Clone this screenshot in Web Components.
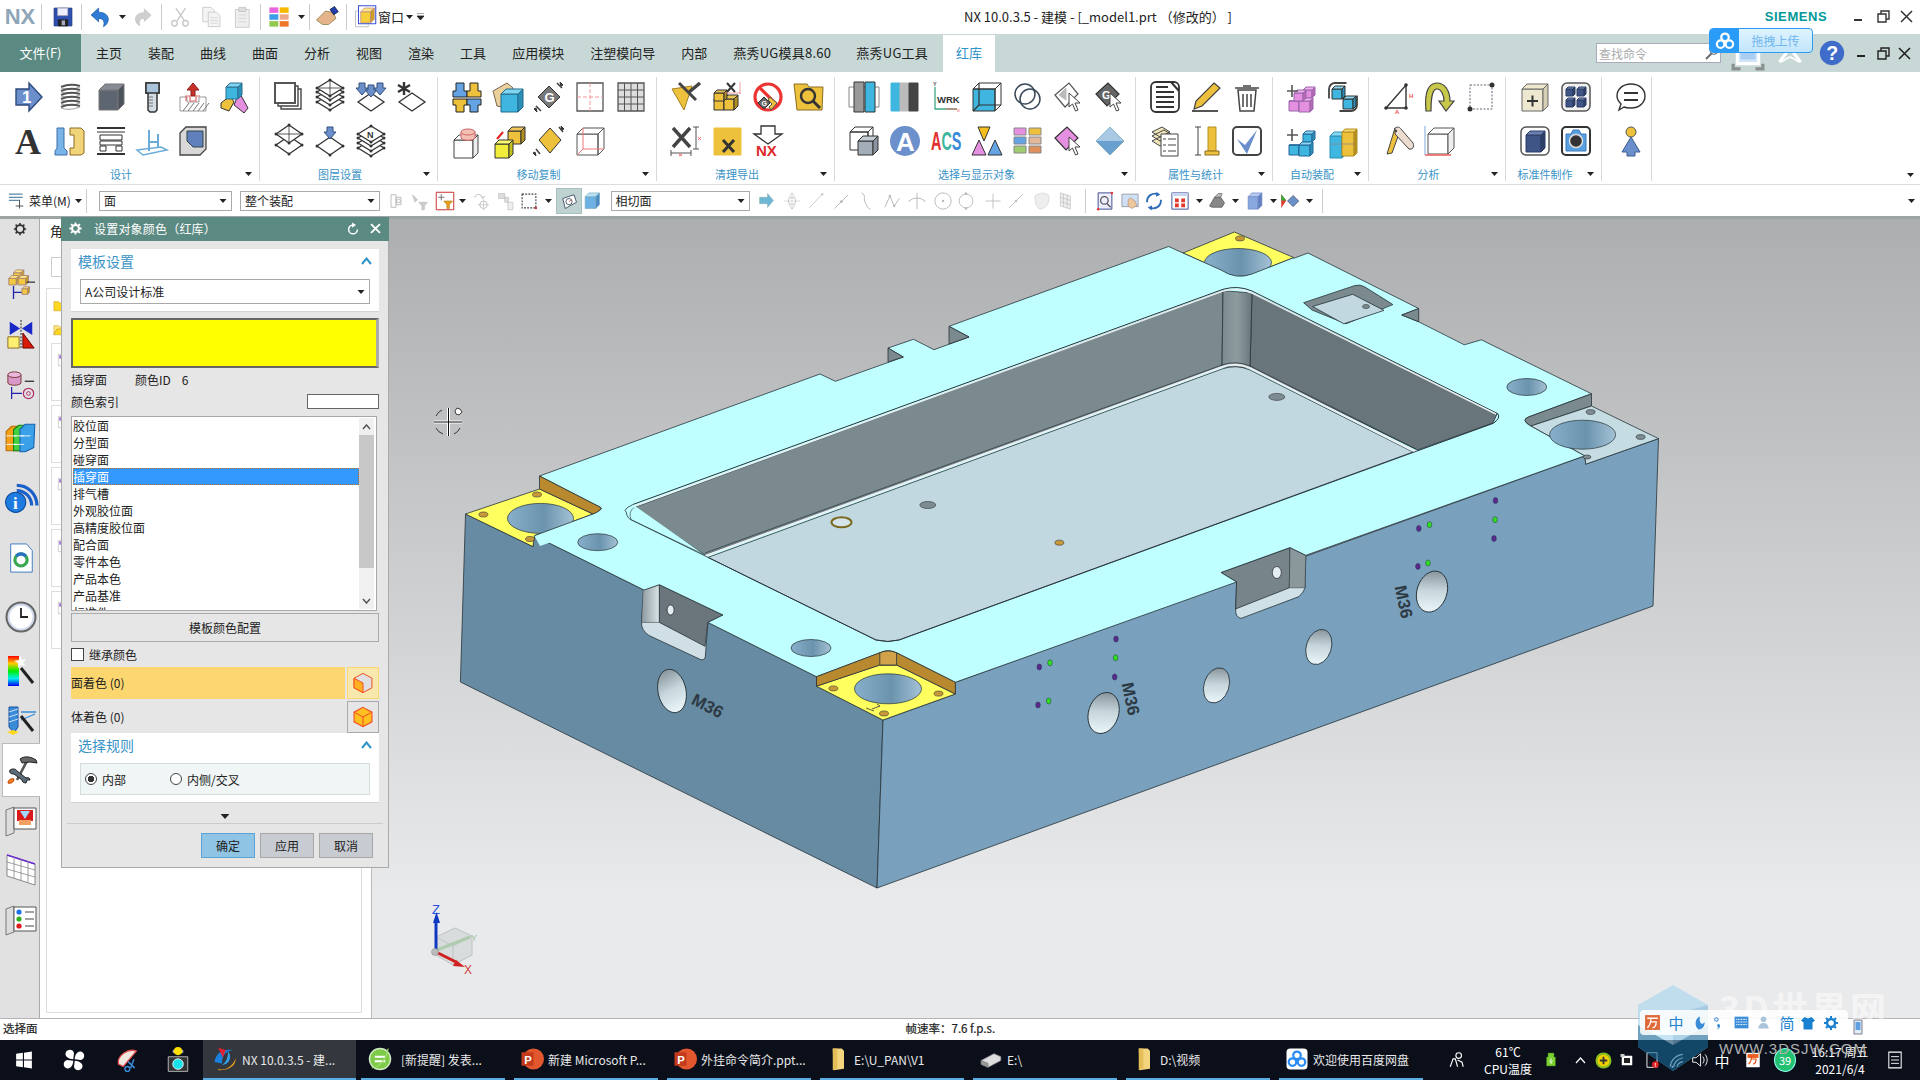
<!DOCTYPE html>
<html lang="zh">
<head>
<meta charset="utf-8">
<title>NX 10</title>
<style>
  html, body { margin: 0; height: 1080px; width: 1920px; overflow: hidden; }
  body {
    position: relative;
    display: flex;
    flex-direction: column;
    font: 12px "Noto Sans CJK SC", "Liberation Sans", sans-serif;
    color: #222;
    background: #fff;
  }
</style>
</head>
<body>
<nx-titlebar></nx-titlebar>
<nx-tabs></nx-tabs>
<nx-ribbon>
  <rib-group label="设计" cols="6" caret>
    <nx-icon name="arrow1"></nx-icon><nx-icon name="spring"></nx-icon><nx-icon name="box"></nx-icon><nx-icon name="bolt"></nx-icon><nx-icon name="pocket"></nx-icon><nx-icon name="shapes"></nx-icon>
    <nx-icon name="bigA"></nx-icon><nx-icon name="pin"></nx-icon><nx-icon name="plates"></nx-icon><nx-icon name="planes"></nx-icon><nx-icon name="hollow"></nx-icon>
  </rib-group>
  <rib-group label="图层设置" cols="4" caret>
    <nx-icon name="copysq"></nx-icon><nx-icon name="layers"></nx-icon><nx-icon name="downs"></nx-icon><nx-icon name="stardia"></nx-icon>
    <nx-icon name="twodia"></nx-icon><nx-icon name="downdia"></nx-icon><nx-icon name="nlayers"></nx-icon>
  </rib-group>
  <rib-group label="移动复制" cols="5" caret>
    <nx-icon name="joints"></nx-icon><nx-icon name="foldbox"></nx-icon><nx-icon name="grot"></nx-icon><nx-icon name="sheet"></nx-icon><nx-icon name="grid"></nx-icon>
    <nx-icon name="cubecyl"></nx-icon><nx-icon name="twocubes"></nx-icon><nx-icon name="goldrot"></nx-icon><nx-icon name="wirered"></nx-icon>
  </rib-group>
  <rib-group label="清理导出" cols="4" caret>
    <nx-icon name="brush"></nx-icon><nx-icon name="goldx"></nx-icon><nx-icon name="nog"></nx-icon><nx-icon name="foldsearch"></nx-icon>
    <nx-icon name="xdim"></nx-icon><nx-icon name="yellowx"></nx-icon><nx-icon name="nxdown"></nx-icon>
  </rib-group>
  <rib-group label="选择与显示对象" cols="7" caret>
    <nx-icon name="bars"></nx-icon><nx-icon name="stripes"></nx-icon><nx-icon name="wrk"></nx-icon><nx-icon name="wireblue"></nx-icon><nx-icon name="circles"></nx-icon><nx-icon name="whitecur"></nx-icon><nx-icon name="gcur"></nx-icon>
    <nx-icon name="wiregray"></nx-icon><nx-icon name="acircle"></nx-icon><nx-icon name="acs"></nx-icon><nx-icon name="tris"></nx-icon><nx-icon name="swatch"></nx-icon><nx-icon name="pinkcur"></nx-icon><nx-icon name="bluedia"></nx-icon>
  </rib-group>
  <rib-group label="属性与统计" cols="3" caret>
    <nx-icon name="doc"></nx-icon><nx-icon name="pencil"></nx-icon><nx-icon name="trash"></nx-icon>
    <nx-icon name="sheets"></nx-icon><nx-icon name="heightbar"></nx-icon><nx-icon name="check"></nx-icon>
  </rib-group>
  <rib-group label="自动装配" cols="2" caret>
    <nx-icon name="pinkplus"></nx-icon><nx-icon name="swapcube"></nx-icon>
    <nx-icon name="blueplus"></nx-icon><nx-icon name="bluegold"></nx-icon>
  </rib-group>
  <rib-group label="分析" cols="3" caret>
    <nx-icon name="triangle"></nx-icon><nx-icon name="arcarrow"></nx-icon><nx-icon name="dashrect"></nx-icon>
    <nx-icon name="anglebar"></nx-icon><nx-icon name="cubeline"></nx-icon>
  </rib-group>
  <rib-group label="标准件制作" cols="2" caret>
    <nx-icon name="cubeplus"></nx-icon><nx-icon name="fourcubes"></nx-icon>
    <nx-icon name="navycube"></nx-icon><nx-icon name="camera"></nx-icon>
  </rib-group>
  <rib-group cols="1" narrow>
    <nx-icon name="speech"></nx-icon><nx-icon name="person"></nx-icon>
  </rib-group>
</nx-ribbon>
<nx-selbar></nx-selbar>
<nx-main>
  <nx-rail slot="rail"></nx-rail>
  <nx-panel slot="panel"></nx-panel>
  <nx-model slot="view"></nx-model>
</nx-main>
<nx-status></nx-status>
<nx-taskbar></nx-taskbar>
<nx-dialog></nx-dialog>
<nx-upload></nx-upload>
<nx-watermark></nx-watermark>
<nx-ime></nx-ime>

<script>
// drawing helpers, icons are all on a 32 unit box
const L = (d, c = '#333', w = 2) => `<path d="${d}" fill="none" stroke="${c}" stroke-width="${w}"/>`;
const F = (d, f, s = '#333', w = 1) => `<path d="${d}" fill="${f}" stroke="${s}" stroke-width="${w}"/>`;
const T = (x, y, t, size, c, fam = 'Liberation Sans', wt = 'bold') =>
  `<text x="${x}" y="${y}" font-size="${size}" fill="${c}" font-family='${fam}' font-weight="${wt}">${t}</text>`;
const cube = (x, y, w, h, d, top, front, side, st = '#333') =>
  F(`M${x} ${y + d}h${w}v${h}h${-w}z`, front, st) +
  F(`M${x} ${y + d}l${d} ${-d}h${w}l${-d} ${d}z`, top, st) +
  F(`M${x + w} ${y + d}l${d} ${-d}v${h}l${-d} ${d}z`, side, st);
const dia = (cy, f = '#fff', rx = 13, ry = 8, cx = 16) =>
  F(`M${cx - rx} ${cy}L${cx} ${cy - ry}L${cx + rx} ${cy}L${cx} ${cy + ry}z`, f, '#333', 1.3);
const dots = (cy, rx = 13, ry = 8, cx = 16) =>
  [[cx - rx, cy], [cx + rx, cy], [cx, cy - ry], [cx, cy + ry]].map(p => `<circle cx="${p[0]}" cy="${p[1]}" r="1.5" fill="#333"/>`).join('');
const cursor = (x, y) => F(`M${x} ${y}l0 14l3.5-3l3 7l2.5-1l-3-7l5 0z`, '#fff', '#444', 1);
const downArrow = (cx, y, f = '#6a8fcb') => F(`M${cx - 3} ${y}h6v5h3l-6 7l-6-7h3z`, f, '#33507f', 1);

const BLUE = '#3fb6e0', GOLD = '#eec13c', PINK = '#e58fe0', NAVY = '#3f5585';

const ICONS = {
  arrow1: F('M3 8h13V2l13 14-13 14v-6H3z', '#6a8fcb', '#2c4a7c', 1.4) + T(9, 22, '1', 17, '#fff'),
  spring: [5, 9, 13, 17, 21, 25].map(y => L(`M7 ${y + 1}Q16 ${y - 3} 26 ${y}`, '#555', 2) + L(`M7 ${y + 2}Q16 ${y + 5} 26 ${y + 1}`, '#aaa', 1.2)).join(''),
  box: cube(4, 3, 19, 20, 6, '#858c95', '#5d6570', '#4b535d', '#777'),
  bolt: F('M10 2h13v10h-2v17l-2 2h-5l-2-2V12h-2z', '#d3dde6', '#333', 1.5) + F('M10 2h13v10H10z', '#a9c3db', '#333', 1.5) + [16, 19, 22, 25].map(y => L(`M13 ${y}h4`, '#777', 1)).join(''),
  pocket: F('M3 16h7v5h12v-5h7v14H3z', '#fff', '#999', 1) + [6, 11, 16, 21, 26].map(x => L(`M${x} 30l6-8`, '#777', 1)).join('') + F('M9 20v-5h4v5h6v-5h4', 'none', '#d66', 1.2) + F('M14 15V9h-4l6-7l6 7h-4v6z', '#c8312a', '#8a1e18', 1),
  shapes: F('M3 22l9-7l4 6l-5 9l-8-3z', GOLD, '#333') + F('M21 11l9 16l-4 5l-10-8z', PINK, '#333') + cube(8, 2, 12, 12, 4, '#7fd4ef', BLUE, '#2a90b8', '#2a6f90'),
  bigA: T(2, 29, 'A', 36, '#333', 'Liberation Serif'),
  pin: F('M3 3h7v20l3 3v4H1v-4l2-3z', '#79b4e8', '#3f6fa8') + F('M16 3h11l3 3v22l-3 2H16v-7h4V10h-4z', '#f2d47a', '#8a6a20'),
  plates: L('M2 3h28', '#333', 2) + L('M2 7h28', '#333', 1) + F('M5 10h22v5H5z', '#fff') + F('M5 16h22v4H5z', '#fff') + F('M5 21h6v5H5zM21 21h6v5h-6z', '#fff') + L('M2 29h28', '#333', 2),
  planes: L('M1 25l24-3l6 3-24 5z', '#6aabd8', 1.5) + L('M13 5v21M22 9v14M13 17h9', '#6aabd8', 2),
  hollow: F('M3 8l6-6h20v22l-6 6H3z', '#d8d8d8', '#444', 1.3) + F('M10 6h16v16H16l-6-6z', '#5f80bd', '#344'),
  copysq: F('M8 8h20v20H8z', '#fff', '#444', 1.4) + F('M5 5h20v20H5z', '#fff', '#444', 1.4) + F('M2 2h20v20H2z', '#fff', '#555', 2),
  layers: [21, 16, 11, 7].map(y => dia(y) + dots(y)).join('') + L('M3 7h26M16 -1v16', '#333', .8),
  downs: dia(21, '#fff', 13, 9) + downArrow(7, 2) + downArrow(16, 4) + downArrow(25, 2),
  stardia: dia(21, '#fff', 13, 9) + L('M8 1v13M2 4l12 7M14 4L2 11', '#333', 2.4),
  twodia: dia(20, '#fff', 13, 9) + dots(20, 13, 9) + dia(9, '#fff', 13, 9) + dots(9, 13, 9) + L('M3 9h26M16 0v18', '#333', .8),
  downdia: dia(21, '#fff', 13, 9) + dots(21, 13, 9) + downArrow(16, 2),
  nlayers: [23, 18, 13].map(y => dia(y) + dots(y)).join('') + dia(9) + dots(9) + T(12, 13, 'N', 9, '#333'),
  joints: F('M5 2h8v8h3v6H2v-6h3z', '#64a4e4', '#222') + F('M19 2h8v8h3v6H16v-6h3z', GOLD, '#222') + F('M2 18h14v6h-3v7H5v-7H2z', GOLD, '#222') + F('M16 18h14v6h-3v7h-8v-7h-3z', '#64a4e4', '#222'),
  foldbox: F('M1 10l14-8l6 5l-6 20l-10-2z', '#ead09a', '#765') + cube(9, 8, 17, 18, 5, '#7fd4ef', BLUE, '#2a90b8', '#256a8a'),
  grot: F('M16 5l11 11l-11 11L5 16z', '#777', '#333') + T(11.5, 21, 'G', 13, '#fff') + L('M24 2l5 5M3 25l5 5', '#444', 1.6) + F('M27 1l3 3l-2 1zM4 31l-3-3l2-1z', '#333', '#333'),
  sheet: F('M3 2h26v28H3z', '#fff', '#555', 1.3) + L('M16 2v28M3 16h26', '#f29a9a', 1).replace('stroke-width', 'stroke-dasharray="4 2" stroke-width'),
  grid: F('M3 2h26v28H3z', '#ddd', '#555', 1.3) + L('M9.5 2v28M16 2v28M22.5 2v28M3 9h26M3 16h26M3 23h26', '#555', 1),
  cubecyl: cube(3, 10, 19, 18, 5, '#fff', '#fff', '#eee', '#444') + F('M10 7v6c2 3 12 3 14 0V7', '#f4c0b4', '#c66') + `<ellipse cx="17" cy="7" rx="7" ry="3" fill="#f4c0b4" stroke="#c66"/>`,
  twocubes: cube(16, 2, 13, 13, 4, '#f0c85c', GOLD, '#b38f20') + cube(3, 15, 14, 14, 4, '#ffff70', '#f0ee3a', '#c4c020') + L('M5 14l6-7', '#e02020', 2),
  goldrot: F('M17 3l11 12l-11 13L6 15z', GOLD, '#333') + L('M26 2l4 5M3 24l4 5', '#444', 1.6) + F('M28 1l3 3l-2 1zM3 31l-3-3l2-1z', '#333', '#333'),
  wirered: cube(3, 3, 21, 21, 6, '#fff', 'none', 'none', '#555') + L('M9 3v21h21M9 24l-6 6', '#ee7777', 1),
  brush: F('M2 8l20-3l-8 24z', GOLD, '#a08020') + L('M18 12L30 2', '#444', 3.5) + L('M9 2L26 19', '#444', 3),
  goldx: cube(3, 14, 10, 11, 4, '#e8c458', GOLD, '#b38f20') + cube(13, 14, 10, 11, 4, '#e8c458', GOLD, '#b38f20') + cube(3, 9, 10, 8, 3, '#e8c458', GOLD, '#b38f20') + L('M16 2l8 9M24 2l-8 9', '#333', 2) + L('M14 12h16M29 1v12', '#e88', .8),
  nog: `<circle cx="16" cy="16" r="13" fill="#fff" stroke="#e33" stroke-width="3.2"/>` + L('M7 6l19 19', '#e33', 3.2) + F('M6 22l6-6l6 6l-6 6z', '#666') + T(9.5, 25, 'G', 7, '#fff') + F('M18 16l7 6l-6 7l-2-3l3-3l-4-4z', GOLD, '#555'),
  foldsearch: F('M1 3h13l2 3h14l-1 23H4z', GOLD, '#8a6a20') + `<circle cx="15" cy="15" r="7" fill="${GOLD}" stroke="#333" stroke-width="2.4"/>` + L('M20 20l7 7', '#333', 3),
  xdim: L('M3 3l17 19M20 3L3 22', '#444', 3.4) + L('M26 2v22M23 2h6M23 24h6M1 28h20M1 25v6M21 25v6', '#555', 1) + L('M28 12l3 3M31 12l-3 3M9 29l3 2M12 29l-3 2', '#e44', .7),
  yellowx: F('M3 3h27v27H3z', GOLD, GOLD) + L('M12 15l11 12M23 15L12 27', '#333', 3),
  nxdown: F('M9 1h14v8h7L16 19 2 9h7z', '#fff', '#333', 1.3) + T(4, 31, 'NX', 15, '#e0282c'),
  bars: F('M1 6h30v20H1z', 'none', '#888') + F('M6 1h10v30H6z', '#9a9a9a', '#333') + F('M17 1h10v30H17z', BLUE, '#333'),
  stripes: F('M2 2h9v28H2z', BLUE, BLUE) + F('M11 2h9v28h-9z', '#bbb', '#bbb') + F('M20 2h9v28h-9z', '#444', '#444'),
  wrk: L('M5 6v22h22', '#3ea888', 1.3) + L('M16 28h11', '#e66', 1) + T(3, 5, 'Y', 5.5, '#555') + T(7, 22, 'WRK', 9.5, '#333') + T(27, 31, 'x', 5.5, '#e55', 'Liberation Sans', 'normal'),
  wireblue: cube(2, 2, 22, 22, 6, 'none', BLUE, 'none', '#333') + L('M8 2v22h22M2 30l6-6', '#333', 1.2),
  circles: `<circle cx="13" cy="13" r="10" fill="none" stroke="#3a4a58" stroke-width="1.5"/><circle cx="18" cy="18" r="10" fill="none" stroke="#3a4a58" stroke-width="1.5"/>`,
  whitecur: F('M2 14L16 2l9 11l-13 13z', '#fff', '#555', 1.2) + F('M6 14l7-7v12z', '#bbb', '#bbb') + cursor(16, 12),
  gcur: F('M2 13L14 2l11 11-12 12z', '#666', '#333', 1.2) + T(8, 18, 'G', 11, '#fff') + cursor(16, 12),
  wiregray: cube(2, 2, 18, 18, 5, 'none', 'none', 'none', '#333') + cube(10, 11, 15, 14, 5, '#c4ccd4', '#a3adb8', '#8a94a0'),
  acircle: `<circle cx="16" cy="16" r="15" fill="#6c90cc"/>` + T(7, 26, 'A', 26, '#fff'),
  acs: `<text transform="translate(1 25) scale(.72 1.32)" font-size="20" font-family="Liberation Sans" font-weight="bold"><tspan fill="#e03030">A</tspan><tspan fill="#3fb6a0">C</tspan><tspan fill="#3a8cd8">S</tspan></text>`,
  tris: F('M7 2h12L13 16z', '#f4c020', '#333') + F('M1 30L8 15l7 15z', PINK, '#333') + F('M17 30l7-15l7 15z', '#64a4e4', '#333'),
  swatch: F('M2 3h12v7H2z', PINK, '#888') + F('M17 3h12v7H17z', GOLD, '#888') + F('M2 12h12v7H2z', '#64a4e4', '#888') + F('M17 12h12v7H17z', '#e4b89c', '#888') + F('M2 21h12v7H2z', '#a0cc70', '#888') + F('M17 21h12v7H17z', '#e0905c', '#888'),
  pinkcur: F('M2 13L14 2l11 11-12 12z', PINK, '#333', 1.2) + cursor(16, 12),
  bluedia: F('M16 2l14 14-14 14L2 16z', '#6aa0d0', '#7ab', 1) + F('M16 2l14 14H2z', '#a8c8e4', 'none', 0),
  doc: `<rect x="2" y="1" width="28" height="30" rx="5" fill="#fff" stroke="#333" stroke-width="1.8"/>` + L('M7 11h18M7 16h18M7 21h18M7 26h18', '#333', 2.2) + L('M7 6h12M22 1l8 9', '#333', 2),
  pencil: F('M24 2l6 5L12 25l-8 3l2-8z', GOLD, '#444', 1.2) + L('M2 30h26', '#555', 2),
  trash: F('M7 9h18l-2 21H9z', '#fff', '#444', 1.5) + L('M4 7h24M12 5h8M12 13v13M16 13v13M20 13v13', '#444', 1.5),
  sheets: F('M3 16l12-6l8 5-12 6zM3 11l12-6l8 5-12 6zM3 7l10-5l8 5-10 5z', '#f0e4b8', '#444') + F('M12 9h17v22H12z', '#fff', '#444') + L('M14 14h3M19 14h8M14 20h3M19 20h8M14 26h3M19 26h8', '#444', 1),
  heightbar: F('M18 2h8v24h-8z', GOLD, '#b38f20') + F('M15 26h14v4H15z', GOLD, '#8a6a20') + L('M8 2v28M5 2h6M5 30h6', '#444', 1),
  check: `<rect x="2" y="2" width="28" height="28" rx="4" fill="#fff" stroke="#444" stroke-width="2"/>` + F('M6 14l8 6L26 5l-10 24z', '#6a8fcb', 'none', 0),
  pinkplus: cube(17, 6, 9, 8, 3, '#f0b0ec', PINK, '#b868b4', '#96a') + cube(3, 20, 10, 10, 0, PINK, PINK, PINK, '#96a') + cube(13, 17, 11, 11, 3, '#f0b0ec', PINK, '#b868b4', '#96a') + cube(8, 9, 9, 8, 3, '#f0b0ec', PINK, '#b868b4', '#96a') + L('M1 10h11M6 4v12', '#555', 1.6),
  blueplus: cube(17, 6, 9, 8, 3, '#8ad8f0', BLUE, '#2a90b8', '#269') + cube(3, 20, 10, 10, 0, BLUE, BLUE, BLUE, '#269') + cube(13, 17, 11, 11, 3, '#8ad8f0', BLUE, '#2a90b8', '#269') + L('M1 10h11M6 4v12', '#555', 1.6),
  swapcube: `<rect x="2" y="2" width="28" height="28" rx="6" fill="#fff" stroke="#444" stroke-width="1.8"/>` + F('M20 0h12v14H20z', '#fff', '#fff') + F('M0 18h12v14H0z', '#fff', '#fff') + cube(5, 5, 10, 10, 3, '#8ad8f0', BLUE, '#2a90b8') + cube(16, 15, 10, 10, 3, '#8ad8f0', BLUE, '#2a90b8'),
  bluegold: cube(3, 7, 12, 22, 4, '#8ad8f0', BLUE, '#2a90b8', '#2a90b8') + cube(15, 4, 12, 24, 3, '#f4d470', GOLD, '#b38f20', '#b38f20') + L('M3 19h24', '#888', .8),
  triangle: L('M4 27L24 4v23z', '#333', 1.4) + `<circle cx="4" cy="27" r="1.8" fill="#333"/><circle cx="24" cy="4" r="1.8" fill="#333"/><circle cx="24" cy="27" r="1.8" fill="#333"/>` + T(27, 17, 'H', 6, '#e55') + T(13, 33, 'A', 6, '#e55'),
  arcarrow: F('M3 30C1 10 6 2 14 2s13 8 13 18h4l-8 10l-7-10h5C21 14 18 8 14 8S8 14 8 30z', '#c8c84a', '#444', 1.2),
  dashrect: L('M6 4h22v24H6z', '#667', 1).replace('stroke-width', 'stroke-dasharray="2 1.5" stroke-width') + `<circle cx="28" cy="4" r="2.5" fill="#333"/><circle cx="6" cy="28" r="2.5" fill="#333"/>`,
  anglebar: F('M13 3l5 3l-8 22l-5 1z', GOLD, '#444') + F('M13 3c4-2 5 0 6 1l12 14c2 4-1 7-4 6L13 9z', '#ecdcd0', '#444') + `<circle cx="14" cy="6" r="1.2" fill="#444"/>`,
  cubeline: cube(5, 3, 20, 20, 6, '#fff', '#fff', '#eee', '#555') + L('M2 1v29', '#7aa8d8', 1) + L('M2 30h26', '#ee6666', 1.6),
  cubeplus: cube(3, 3, 21, 22, 5, '#efe8d0', '#efe8d0', '#d8d0b4', '#666') + L('M8 20h11M13.5 14.5v11', '#333', 2),
  fourcubes: `<rect x="2" y="2" width="28" height="28" rx="5" fill="#f2f2f2" stroke="#555" stroke-width="1.5"/>` + [[6, 6], [17, 6], [6, 17], [17, 17]].map(p => cube(p[0], p[1], 7, 7, 2, '#7a90c0', NAVY, '#2d3f66', '#2d3f66')).join(''),
  navycube: `<rect x="2" y="2" width="28" height="28" rx="5" fill="#fff" stroke="#555" stroke-width="1.5"/>` + cube(7, 6, 15, 17, 4, '#6a80b0', NAVY, '#2d3f66', '#2d3f66'),
  camera: `<rect x="2" y="2" width="28" height="28" rx="4" fill="#fff" stroke="#333" stroke-width="2"/>` + F('M6 9h5l2-4h6l2 4h5v17H6z', '#5aa0e0', '#3a78c0', 1) + `<circle cx="16" cy="16" r="6.5" fill="#333" stroke="#ddd" stroke-width="1.5"/>`,
  speech: F('M16 3c8 0 14 5 14 12s-6 12-14 12c-3 0-5 0-7-1l-5 3l2-6c-2-2-4-5-4-8C2 8 8 3 16 3z', '#fff', '#333', 1.4) + L('M9 12h14M9 19h14', '#333', 2),
  person: `<circle cx="16" cy="7" r="5" fill="${GOLD}" stroke="#555"/>` + F('M16 12l9 15h-5v4h-8v-4H7z', '#6a8fcb', '#3a5c90'),

  // quick access
  nxsave: F('M3 3h26v26H3z', '#2d4fb0', '#1b2f70') + F('M8 3h15v11H8z', '#eef', '#99a') + F('M9 20h14v9H9z', '#222', '#222') + F('M14 21h5v7h-5z', '#aab', 'none', 0),
  undo: F('M3 13L14 3v6c9 0 15 5 14 12c-1 4-3 7-7 9c2-6 1-12-7-12v5z', '#2e7cd6', '#1c56a0'),
  redo: F('M29 13L18 3v6C9 9 3 14 4 21c1 4 3 7 7 9c-2-6-1-12 7-12v5z', '#cfcfcf', '#bbb'),
  cut: L('M10 3l12 18M24 3L12 21', '#c8c8c8', 2) + `<circle cx="8" cy="25" r="4" fill="none" stroke="#c8c8c8" stroke-width="2"/><circle cx="24" cy="25" r="4" fill="none" stroke="#c8c8c8" stroke-width="2"/>`,
  copy: F('M4 2h12l5 5v16H4z', '#f4f4f4', '#ccc', 1.4) + F('M12 9h12l5 5v16H12z', '#f4f4f4', '#ccc', 1.4) + L('M15 17h11M15 21h11M15 25h11', '#ccc', 1),
  paste: F('M5 5h20v26H5z', '#eee', '#ccc', 1.4) + F('M10 2h10v6H10z', '#ddd', '#bbb') + L('M9 13h12M9 18h12M9 23h12', '#ccc', 1),
  colors: F('M2 2h13v8H2z', '#e865e0', 'none', 0) + F('M17 2h13v8H17z', '#f6b800', 'none', 0) + F('M2 12h13v8H2z', '#3b9de8', 'none', 0) + F('M17 12h13v8H17z', '#eea888', 'none', 0) + F('M2 22h13v8H2z', '#90c850', 'none', 0) + F('M17 22h13v8H17z', '#ee7828', 'none', 0),
  hand: F('M2 20l12-12l10 2l4 8l-10 8l-8 0z', '#e6b48a', '#874') + F('M20 6l6-4l5 7l-6 4z', '#2040b0', '#113'),
  winbox: L('M2 8h3M2 8v21h17v-3', '#bbb', 1.2) + cube(9, 4, 13, 15, 5, '#ffe680', '#f6cf3a', '#d0a020', '#b88') + L('M6 1h23v24H6z', '#3a50d0', 1.4),

  // selection bar
  menu: L('M3 5h22M3 10h22M3 15h16', '#5d8aa8', 2) + L('M20 14v14M14 24h12', '#555', 1.6),
  s1: L('M8 6h8v20H8zM16 10h8v12h-8z', '#bbb', 1.5) + `<circle cx="20" cy="16" r="3" fill="none" stroke="#bbb" stroke-width="1.5"/>`,
  s2: F('M4 6l8 8l-4 4zM14 18h14l-5 6v6h-4v-6z', '#ccc', '#bbb'),
  s3: F('M2 2h28v28H2z', '#fff', '#c33', 1.6) + L('M10 5v10M5 10h10', '#666', 1.4) + F('M14 16h14l-5 6v6h-4v-6z', '#e6a020', '#b58010'),
  s4: L('M6 10c2-6 10-6 12 0M16 8l3 4l3-4', '#bbb', 1.6) + `<circle cx="20" cy="22" r="6" fill="none" stroke="#bbb" stroke-width="1.4"/>` + L('M20 13v18M11 22h18', '#bbb', 1),
  s5: F('M4 4h10v8H4zM14 10h6v8h-6z', '#ddd', '#bbb') + F('M19 18h8v12h-8z', '#eee', '#bbb'),
  s6: L('M5 5h22v22H5z', '#444', 1.8).replace('stroke-width', 'stroke-dasharray="3 2" stroke-width') + `<circle cx="27" cy="27" r="2" fill="#c33"/>`,
  s7: F('M6 12L24 6l4 12L10 28z', '#fff', '#456', 1.5) + `<circle cx="16" cy="17" r="5" fill="none" stroke="#456" stroke-width="1.4"/>` + L('M16 17l4-3', '#c33', 1.2),
  s8: cube(5, 3, 17, 19, 6, '#b8e0f4', '#6cb0e4', '#4a8cc8', '#7ab'),
  arrowr: F('M3 10h15V3l11 13-11 13v-7H3z', '#6fb7d6', '#8aa'),
  p1: L('M16 3v26M3 16h26', '#ccc', 1) + `<circle cx="16" cy="16" r="6" fill="none" stroke="#bbb" stroke-width="1.3"/>` + L('M16 3l-5 7M16 3l5 7M16 29l-5-7M16 29l5-7', '#bbb', 1),
  p2: L('M5 27L26 5', '#ccc', 1.6) + `<circle cx="26" cy="5" r="2" fill="#ccc"/>`,
  p3: L('M4 28L26 6', '#bbb', 1.6) + `<circle cx="15" cy="17" r="2.2" fill="#bbb"/>`,
  p4: L('M9 3c8 4 2 10 6 16s2 8 8 10', '#bbb', 1.6),
  p5: L('M3 26l8-18l7 16l8-12', '#bbb', 1.6) + `<circle cx="11" cy="8" r="2" fill="#bbb"/><circle cx="18" cy="24" r="2" fill="#bbb"/>`,
  p6: L('M2 17Q16 5 30 17M16 3v26', '#bbb', 1.6),
  p7: `<circle cx="16" cy="16" r="13" fill="none" stroke="#bbb" stroke-width="1.5"/><circle cx="16" cy="16" r="2" fill="#bbb"/>`,
  p8: `<circle cx="16" cy="16" r="11" fill="none" stroke="#bbb" stroke-width="1.5"/><circle cx="16" cy="4" r="2" fill="#bbb"/><circle cx="16" cy="28" r="2" fill="#bbb"/>`,
  p9: L('M16 4v24M4 16h24', '#bbb', 1.4),
  p10: L('M5 27L27 5', '#bbb', 1.4) + `<circle cx="16" cy="16" r="2" fill="#bbb"/>`,
  p11: F('M5 8c6-6 18-6 22 0v8c-2 6-6 12-14 13C7 26 5 20 5 14z', '#eee', '#ccc'),
  p12: F('M7 3l16 5v21L7 24z', '#eee', '#bbb') + L('M12 5v20M18 6v21M7 10l16 5M7 17l16 5', '#bbb', 1),
  v1: F('M5 3h22v26H5z', '#eef', '#2a3a80', 1.4) + `<circle cx="15" cy="15" r="6" fill="none" stroke="#555" stroke-width="2"/>` + L('M19 20l6 6', '#555', 2) + `<circle cx="5" cy="29" r="2" fill="#e33"/><circle cx="27" cy="3" r="2" fill="#e33"/>`,
  v2: F('M3 5h26v20H3z', '#cfe0f4', '#778') + F('M13 14l4-3l7 5l3 7l-8 5l-6-4z', '#eec89c', '#a87'),
  v3: L('M5 18C4 8 14 2 22 5M27 14c1 10-9 16-17 13', '#2c6cb8', 3) + F('M20 1l6 5l-7 3z', '#2c6cb8', 'none', 0) + F('M12 31l-6-5l7-3z', '#2c6cb8', 'none', 0),
  v4: F('M3 3h26v26H3z', '#fff', '#3a4a90', 1.5) + F('M3 3h26v5H3z', '#c8d4f0', 'none', 0) + F('M8 12h6v6H8zM18 12h6v6h-6zM8 20h6v6H8zM18 20h6v6h-6z', '#e03a2c', 'none', 0),
  v5: F('M4 24l8-14h10l6 9l-4 7H8z', '#888', '#444') + F('M12 10l6-6h6l-2 6z', '#bbb', '#555'),
  v6: cube(5, 3, 16, 20, 6, '#b4c8f0', '#8aa8e0', '#6080c0', '#6680c0'),
  v7: F('M2 5l8 10l-8 12z', '#e03a2c', 'none', 0) + F('M2 5l8 10l-8 0z', '#38a838', 'none', 0) + F('M12 16l9-9l9 9l-9 9z', '#6a90c8', '#445'),

  // rail
  r_asm: cube(8, 1, 8, 7, 3, '#ffe680', '#f2c840', '#c89c20', '#a87') + cube(3, 7, 8, 7, 3, '#ffe680', '#f2c840', '#c89c20', '#a87') + cube(13, 7, 8, 7, 3, '#ffe680', '#f2c840', '#c89c20', '#a87') + L('M8 18v14M8 25h9', '#2222aa', 1.4) + L('M22 14h9', '#222', 1.2) + cube(17, 19, 6, 6, 2, '#ffe680', '#f2c840', '#c89c20', '#a87'),
  r_con: F('M4 3l11 7l-11 7zM28 3L17 10l11 7z', '#1a28c8', 'none', 0) + L('M16 1v31', '#111', 1).replace('stroke-width', 'stroke-dasharray="2 1.5" stroke-width') + F('M2 19h12v12H2z', '#ffef70', '#8a6a20') + F('M18 15l12 16H18z', '#d81a0a', '#600'),
  r_part: F('M2 5v9c2 3 12 3 14 0V5', '#d898c8', '#733') + `<ellipse cx="9" cy="5" rx="7" ry="3" fill="#eab8dc" stroke="#733"/>` + L('M20 12h10', '#222', 1.3) + L('M6 18v13M6 25h11', '#2222aa', 1.3) + `<circle cx="24" cy="25" r="5.5" fill="none" stroke="#b0306a" stroke-width="1.3"/><circle cx="24" cy="25" r="2" fill="none" stroke="#b0306a"/>`,
  r_books: F('M2 10l5-5h6v23H2z', '#f2a018', '#b86a00') + F('M9 8l5-4h6v24H9z', '#40d040', '#108010') + F('M15 8l5-5h9l-1 22-8 4h-5z', '#3aa0e8', '#1a60b0') + L('M2 14h10M9 14h10M15 14h10M2 22h10M9 22h10', '#fff', .8),
  r_info: `<path d="M12 10a14 14 0 0 1 14 14M12 5a19 19 0 0 1 19 19" fill="none" stroke="#1a60c8" stroke-width="3"/><circle cx="11" cy="21" r="9.5" fill="#1e7ce0" stroke="#0a4a9a"/>` + T(8.5, 27, 'i', 16, '#fff', 'Liberation Serif'),
  r_doc: F('M5 1h17l6 7v23H5z', '#fff', '#3a78c0', 1) + `<circle cx="16" cy="18" r="6.5" fill="none" stroke="#3aa850" stroke-width="3.4"/>` + `<path d="M11 14a6.5 6.5 0 0 1 10 0" fill="none" stroke="#2a70c8" stroke-width="3.4"/>`,
  r_clock: `<circle cx="16" cy="16" r="14.5" fill="#d0d8ec" stroke="#666" stroke-width="2"/><circle cx="16" cy="16" r="11.5" fill="#fff"/>` + L('M16 7v9h7', '#222', 1.8),
  r_spec: `<defs><linearGradient id="sp" x1="0" y1="0" x2="0" y2="1"><stop offset="0" stop-color="#f00"/><stop offset=".25" stop-color="#fc0"/><stop offset=".5" stop-color="#0e0"/><stop offset=".75" stop-color="#0ee"/><stop offset="1" stop-color="#00e"/></linearGradient></defs><rect x="3" y="1" width="11" height="30" fill="url(#sp)"/>` + L('M16 13l12 15', '#222', 3) + F('M15 0l2 5l4-1l-3 4l3 3l-5-1l-3 3l0-5l-4-2l5-1z', '#fff', 'none', 0),
  r_drill: F('M4 3h9v20l-4 6l-5-6z', '#3a8cd8', '#1a50a0') + L('M4 8l9-3M4 13l9-3M4 18l9-3', '#cde', 1) + L('M16 8h15M16 16L30 10', '#3a8cd8', 1.3) + L('M16 12l12 15', '#222', 3) + F('M2 28l6-2l6 2l-6 3z', '#ffd820', 'none', 0),
  r_tool: L('M11 26L22 5', '#555', 2.6) + F('M14 5c4-3 10-3 16 1l1 3l-7-1l-8 1z', '#666', '#222') + F('M4 16c3-2 6-1 7 1l9 7c2-1 4 0 4 2l-3 0l-1 3c-3 0-4-2-4-3l-8-6c-3 0-5-1-4-4z', '#5a6a7a', '#222') + F('M2 29c0-3 3-5 6-4c0 3-3 5-6 4z', '#f28020', '#c04000'),
  r_stage: F('M1 5l8-3v26l-8 3z', '#ddd', '#777') + F('M9 3h22v21H9z', '#fff', '#555') + F('M12 5h16v11H12z', '#d81a1a', 'none', 0) + F('M15 6l5 8l5-8z', '#a0d8ff', 'none', 0) + F('M14 15h12v5H14z', '#f0a060', 'none', 0),
  r_table: F('M2 1l28 9v21L2 22z', '#fff', '#888') + L('M2 1l28 9', '#6a2ad0', 1.8) + L('M2 8l28 8M2 15l28 8M9 3v21M16 5v21M23 7v21', '#888', .8),
  r_list: F('M1 5l8-3v26l-8 3z', '#ddd', '#777') + F('M9 3h22v24H9z', '#fff', '#555') + `<circle cx="14" cy="8" r="2.6" fill="#1a70e8"/><circle cx="14" cy="15" r="2.6" fill="#30b020"/><circle cx="14" cy="22" r="2.6" fill="#e01a1a"/>` + L('M20 8h9M20 15h9M20 22h9', '#444', 1),
  r_gear: `<circle cx="16" cy="16" r="9" fill="none" stroke="#333" stroke-width="4.2"/>` + L('M16 2v5M16 25v5M2 16h5M25 16h5M6 6l3 3M23 23l3 3M26 6l-3 3M9 23l-3 3', '#333', 3.6),

  // dialog
  gearw: `<circle cx="16" cy="16" r="8.5" fill="none" stroke="#fff" stroke-width="5"/>` + L('M16 1v6M16 25v6M1 16h6M25 16h6M5 5l4 4M23 23l4 4M27 5l-4 4M9 23l-4 4', '#fff', 4.5),
  reset: `<path d="M26 17a10 10 0 1 1-10-10" fill="none" stroke="#fff" stroke-width="3.4"/>` + F('M14 1l9 6l-9 6z', '#fff', 'none', 0),
  closew: L('M5 5l22 22M27 5L5 27', '#fff', 4.4),
  cubew: F('M16 2l13 7v14l-13 7L3 23V9z', '#e0e0e0', '#f24a20', 1.4) + F('M3 9l13 7v14L3 23z', '#ffb020', '#f24a20', 1.4),
  cubeo: F('M16 2l13 7v14l-13 7L3 23V9z', '#ffc020', '#f24a20', 1.6) + L('M3 9l13 7l13-7M16 16v14', '#f24a20', 1.4),
  folder: F('M2 6h11l2 3h15v18H2z', '#ffd820', '#b88a00'),
  folderopen: F('M2 6h11l2 3h13v5H9L2 27z', '#ffe680', '#b88a00') + F('M9 14h21l-6 13H2z', '#ffd820', '#b88a00'),
  minidoc: F('M3 3h26v26H3z', '#fff', '#999') + F('M5 5h8v8H5z', '#a678d8', 'none', 0),

  // taskbar
  win: F('M2 5l12-2v12H2zM16 3l14-2v14H16zM2 17h12v12L2 27zM16 17h14v14l-14-2z', '#fff', 'none', 0),
  fan: F('M15 15C9 15 3 11 5 6s10-5 11 1zM17 15c0-6 4-12 9-10s5 10-1 11zM17 17c6 0 12 4 10 9s-10 5-11-1zM15 17c0 6-4 12-9 10s-5-10 1-11z', '#fff', 'none', 0),
  scissor: F('M3 21C1 11 15 1 25 5l-16 19z', '#f0e8e0', '#e05050', 1.6) + L('M15 18l8 8M22 15l-4 11', '#3a8cd8', 1.8) + `<circle cx="14" cy="27" r="3" fill="none" stroke="#3a8cd8" stroke-width="1.6"/>`,
  camyellow: F('M10 4h12v3H10z', '#ddd', '#aaa') + `<circle cx="16" cy="5" r="5" fill="#ffe000"/>` + F('M4 12h24v18H4z', '#333', '#ccc') + `<circle cx="16" cy="21" r="6.5" fill="#18e0e8" stroke="#fff"/>`,
  nxapp: `<path d="M2 20c2-14 14-18 24-16c-10 2-14 8-14 18z" fill="#1a80e0"/><path d="M6 29c12 4 22-6 24-14c1 8-6 16-22 16z" fill="#e8a018"/><path d="M7 1l10 3l-4 10z" fill="#e02030"/><path d="M20 6c6 6 2 18-8 18c6-4 8-10 8-18z" fill="#30a0e8"/>`,
  ie: `<circle cx="16" cy="16" r="14" fill="#7ecb4a" stroke="#cfe8c0" stroke-width="2"/>` + L('M9 13h14M9 19h14', '#fff', 2.6) + L('M5 28c14-2 20-16 22-26', '#9fdc70', 1.6),
  ppt: `<circle cx="18" cy="16" r="14" fill="#e2572e"/>` + F('M2 7h16v18H2z', '#c43a1c', 'none', 0) + T(5.5, 22, 'P', 15, '#fff'),
  folderv: F('M9 2h12l3 3v24l-14 2z', '#f4d47c', 'none', 0) + F('M9 2h6v26l-6 3z', '#e4bc58', 'none', 0),
  disk: F('M3 18l17-9l9 4v5l-17 9l-9-4z', '#ddd', '#999') + F('M3 18l9 4v5l-9-4z', '#999', '#777'),
  baidu: `<rect x="2" y="2" width="28" height="28" rx="5" fill="#fff"/>` + `<circle cx="16" cy="11" r="5" fill="none" stroke="#2a8cf0" stroke-width="3"/><circle cx="10" cy="20" r="5" fill="none" stroke="#2a8cf0" stroke-width="3"/><circle cx="22" cy="20" r="5" fill="none" stroke="#2a8cf0" stroke-width="3"/>`,
  baiduw: `<circle cx="16" cy="10" r="6" fill="none" stroke="#fff" stroke-width="3.6"/><circle cx="9" cy="21" r="6" fill="none" stroke="#fff" stroke-width="3.6"/><circle cx="23" cy="21" r="6" fill="none" stroke="#fff" stroke-width="3.6"/>`,
  tperson: `<circle cx="19" cy="8" r="5" fill="none" stroke="#fff" stroke-width="2"/>` + L('M4 28l5-14h4l4 14M17 16l8 4l2 8', '#fff', 2),
  usb: F('M10 2h12v8h3v18H7V10h3z', '#7ad030', '#3a7010') + L('M16 12v12M12 17l4 4l4-4', '#fff', 1.6),
  gplus: `<circle cx="16" cy="16" r="15" fill="#8cc020"/><circle cx="16" cy="16" r="11" fill="#f4d000"/>` + L('M16 9v14M9 16h14', '#333', 3.4),
  tray1: F('M6 8h20v18H6z', '#fff', '#fff') + F('M10 12h12v10H10z', '#222', 'none', 0) + F('M3 4h8v6H3z', '#ccc', 'none', 0),
  tray2: F('M7 3h18v26H7z', 'none', '#fff', 1.6) + `<circle cx="22" cy="24" r="6" fill="#e02020"/>` + T(20.5, 28, '!', 10, '#fff'),
  wifi: L('M6 28c0-10 8-20 22-22M12 28c0-6 6-14 16-16M18 28c0-3 3-8 10-9', '#fff', 2.2) + `<circle cx="10" cy="28" r="2" fill="#fff"/>`,
  vol: F('M3 12h6l8-7v22l-8-7H3z', 'none', '#fff', 1.6) + L('M21 10c3 4 3 8 0 12M25 6c5 6 5 14 0 20', '#fff', 1.6),
  wan: F('M3 2h26v28H3z', '#fff', '#fff') + F('M5 4h22v8H5z', '#f0682a', 'none', 0) + L('M7 8h18M13 8c0 10-3 14-6 16M13 14h9c0 6-2 10-6 10', '#e8501a', 2.4),
  notif: F('M5 2h22v28H5z', 'none', '#fff', 1.8) + L('M9 10h14M9 16h14M9 22h14', '#fff', 1.6),
  imewan: F('M2 2h28v28H2z', '#e06a3a', 'none', 0) + L('M6 8h20M13 8c0 10-3 15-7 18M13 15h10c0 6-2 10-7 11', '#fff', 2.4),
  moon: F('M20 3C10 6 8 22 17 29C27 28 30 20 29 14C25 22 17 16 20 3z', '#3a8cd8', 'none', 0),
  imecomma: `<circle cx="10" cy="8" r="4" fill="none" stroke="#3a8cd8" stroke-width="2.4"/>` + F('M14 18c4 0 6 3 4 7s-5 5-7 5c2-2 4-4 3-5c-3-1-3-7 0-7z', '#3a8cd8', 'none', 0),
  kbd: F('M3 5h26v22H3z', '#3a8cd8', 'none', 0) + L('M6 10h20M6 15h20M6 20h20', '#fff', 1.8).replace('stroke-width', 'stroke-dasharray="2 1" stroke-width'),
  imeperson: `<circle cx="16" cy="9" r="6" fill="#aac4dc"/>` + F('M5 29c0-16 22-16 22 0z', '#aac4dc', 'none', 0),
  shirt: F('M9 4l7 3l7-3l7 7l-5 4v14H7V15l-5-4z', '#1a80d0', 'none', 0),
  imegear: `<circle cx="16" cy="16" r="8" fill="none" stroke="#1a80d0" stroke-width="5"/>` + L('M16 2v6M16 24v6M2 16h6M24 16h6M6 6l4 4M22 22l4 4M26 6l-4 4M10 22l-4 4', '#1a80d0', 4),
  phone: F('M8 2h16v28H8z', '#e4eef8', '#556', 1.5) + F('M11 6h10v16H11z', '#60a0e0', 'none', 0),
  search: `<circle cx="20" cy="11" r="7.5" fill="none" stroke="#666" stroke-width="2.4"/>` + L('M15 17L4 28', '#666', 3.6),
  frame: L('M2 26v5h7M30 26v5h-7', '#8a9090', 3) + F('M6 1h20v25H6z', '#cfe4f8', '#fff', 3) + F('M9 4h14v18H9z', '#aacdf0', 'none', 0),
  fakex: L('M3 27l13-17l13 17', '#fff', 4) + L('M3 27c7 0 9-6 13-6s6 6 13 6', '#fff', 2),
  help: `<circle cx="16" cy="16" r="15" fill="#3f6cc8"/>` + T(9, 25, '?', 24, '#fff'),
};

class NxIcon extends HTMLElement {
  connectedCallback() {
    const size = this.getAttribute('size') || 32;
    const root = this.attachShadow({mode: 'open'});
    root.innerHTML = `<style>:host{display:inline-flex;justify-content:center;align-items:center;flex:none}svg{display:block;overflow:visible}</style>
      <svg width="${size}" height="${size}" viewBox="0 0 32 32">${ICONS[this.getAttribute('name')] || ''}</svg>`;
  }
}
customElements.define('nx-icon', NxIcon);

const icon = (n, s = 32) => `<nx-icon name="${n}" size="${s}"></nx-icon>`;
const caret = (c = '#222') => `<svg width="7" height="4" viewBox="0 0 7 4"><path d="M0 0h7L3.5 4z" fill="${c}"/></svg>`;
const sep = (h = 24, c = '#ccc') => `<span style="display:block;width:1px;height:${h}px;background:${c}"></span>`;

// lays a row out in flow: every item gets the margin that brings its centre to x
function flowRow(items) {
  let right = 0;
  return items.map(it => {
    const [x, w, html] = it;
    const left = x - w / 2;
    const out = `<span style="flex:none;width:${w}px;margin-left:${left - right}px;display:flex;align-items:center;justify-content:center;white-space:nowrap">${html}</span>`;
    right = left + w;
    return out;
  }).join('');
}

class NxTitlebar extends HTMLElement {
  connectedCallback() {
    const root = this.attachShadow({mode: 'open'});
    root.innerHTML = `<style>
      :host{display:flex;height:34px;flex:none;align-items:center;background:#fff;font-size:13px;color:#222;padding-bottom:1px;box-sizing:border-box}
      b{font:bold 22px "Liberation Sans",sans-serif;color:#8fa6b8;letter-spacing:0}
      .siemens{font:bold 13px "Liberation Sans",sans-serif;color:#009999;letter-spacing:.6px}
    </style>` + flowRow([
      [20, 34, '<b>NX</b>'], [41, 1, sep(26)], [63, 24, icon('nxsave', 22)], [81, 1, sep(26)],
      [100, 24, icon('undo', 22)], [122, 8, caret()], [143, 24, icon('redo', 20)], [161, 1, sep(26)],
      [180, 24, icon('cut', 22)], [211, 24, icon('copy', 22)], [243, 24, icon('paste', 22)], [260, 1, sep(26)],
      [279, 24, icon('colors', 22)], [301, 8, caret()], [309, 1, sep(26)], [327, 26, icon('hand', 24)], [346, 1, sep(26)],
      [366, 26, icon('winbox', 24)], [391, 26, '<span>窗口</span>'], [409, 8, caret()], [420, 8, '<svg width="7" height="7" viewBox="0 0 7 7"><path d="M0 0h7M0 3h7L3.5 7z" stroke="#222" fill="#222" stroke-width=".8"/></svg>'],
      [1098, 268, '<span>NX 10.0.3.5 - 建模 - [_model1.prt （修改的） ]</span>'],
      [1796, 62, '<span class="siemens">SIEMENS</span>'],
      [1858, 12, '<svg width="10" height="10"><path d="M1 8h8" stroke="#333" stroke-width="2"/></svg>'],
      [1883, 14, '<svg width="13" height="13"><path d="M1 4h8v8H1zM4 4V1h8v8H9" fill="none" stroke="#333" stroke-width="1.4"/></svg>'],
      [1906, 14, '<svg width="13" height="13"><path d="M1 1l11 11M12 1L1 12" stroke="#333" stroke-width="1.5"/></svg>'],
    ]);
  }
}
customElements.define('nx-titlebar', NxTitlebar);

class NxTabs extends HTMLElement {
  connectedCallback() {
    const names = ['主页', '装配', '曲线', '曲面', '分析', '视图', '渲染', '工具', '应用模块', '注塑模向导', '内部'];
    const root = this.attachShadow({mode: 'open'});
    root.innerHTML = `<style>
      :host{display:flex;height:38px;flex:none;align-items:stretch;background:#c8d8d6;font-size:13px;color:#222}
      .file{width:81px;flex:none;background:#5b8a82;color:#fff;display:flex;align-items:center;justify-content:center;padding-bottom:1px;box-sizing:border-box}
      .tabs{display:flex;margin-left:2px;align-items:center;width:860px;flex:none;padding-bottom:2px;box-sizing:border-box}
      .tab{padding:0 13px;white-space:nowrap}
      .tab.la{letter-spacing:.25px;padding:0 12px 0 13px}
      .cur{width:52px;flex:none;background:#fff;color:#2f93c8;display:flex;align-items:center;justify-content:center;margin-top:1px;padding-bottom:2px;box-sizing:border-box}
      .right{display:flex;align-items:center}
      .search{box-sizing:border-box;height:20px;background:#fff;border:1px solid #aab;color:#aaa;display:flex;align-items:center;padding-left:2px;font-size:12px;justify-content:space-between;width:125px}
    </style>
    <div class="file">文件(F)</div>
    <div class="tabs">${names.map(n => `<div class="tab">${n}</div>`).join('')}<div class="tab la">燕秀UG模具8.60</div><div class="tab la">燕秀UG工具</div></div>
    <div class="cur">红库</div>
    <div class="right">${flowRow([
      [663.5, 125, '<div class="search"><span>查找命令</span>' + icon('search', 16) + '</div>'],
      [753, 34, icon('frame', 34)],
      [795, 26, icon('fakex', 26)],
      [837, 26, icon('help', 26)],
      [866, 12, '<svg width="10" height="10"><path d="M1 8h8" stroke="#222" stroke-width="2"/></svg>'],
      [888, 14, '<svg width="13" height="13"><path d="M1 4h8v8H1zM4 4V1h8v8H9" fill="none" stroke="#222" stroke-width="1.4"/></svg>'],
      [909, 14, '<svg width="13" height="13"><path d="M1 1l11 11M12 1L1 12" stroke="#222" stroke-width="1.6"/></svg>'],
    ])}</div>`;
  }
}
customElements.define('nx-tabs', NxTabs);

class NxRibbon extends HTMLElement {
  connectedCallback() {
    const root = this.attachShadow({mode: 'open'});
    root.innerHTML = `<style>
      :host{display:flex;height:112px;flex:none;background:#fff;border-bottom:1px solid #ddd;box-sizing:content-box;position:relative}
      .end{position:absolute;right:6px;bottom:7px;line-height:0}
    </style><slot></slot><span class="end">${caret()}</span>`;
  }
}
customElements.define('nx-ribbon', NxRibbon);

class RibGroup extends HTMLElement {
  connectedCallback() {
    const cols = +this.getAttribute('cols');
    const label = this.getAttribute('label');
    const root = this.attachShadow({mode: 'open'});
    root.innerHTML = `<style>
      :host{display:flex;flex-direction:column;flex:none;height:104px;margin-top:5px;border-right:1px solid #d6dada;padding:0 5px 0 8px}
      :host([narrow]){padding:0 0 0 8px;width:41px}
      .grid{display:grid;grid-template-columns:repeat(${cols},41px);grid-auto-rows:44px;margin-top:-2px;justify-items:center;align-items:center;height:88px;align-content:start}
      .foot{display:flex;align-items:center;height:18px;color:#3a93c6;font-size:11px;padding-top:3px}
      .foot span{flex:1;text-align:center;margin-right:4px}
      .foot i{width:20px;display:flex;justify-content:center;line-height:0;margin-right:-4px}
    </style>
    <div class="grid"><slot></slot></div>
    <div class="foot"><span>${label || ''}</span>${this.hasAttribute('caret') ? `<i>${caret()}</i>` : ''}</div>`;
  }
}
customElements.define('rib-group', RibGroup);

class NxSelect extends HTMLElement {
  connectedCallback() {
    const root = this.attachShadow({mode: 'open'});
    root.innerHTML = `<style>
      :host{display:flex;box-sizing:border-box;align-items:center;justify-content:space-between;border:1px solid #aaa;background:#fff;padding:0 4px;font-size:12px;color:#222;height:100%;width:100%}
      svg{display:block}
    </style><span>${this.getAttribute('text')}</span>${caret().replace('width="7"', 'width="8"')}`;
  }
}
customElements.define('nx-select', NxSelect);

class NxSelbar extends HTMLElement {
  connectedCallback() {
    const sel = (t, w) => `<nx-select text="${t}" style="width:${w}px;height:20px"></nx-select>`;
    const s = 20;
    const root = this.attachShadow({mode: 'open'});
    root.innerHTML = `<style>
      :host{display:flex;height:31px;flex:none;align-items:center;background:#fff;font-size:12px;border-bottom:3px solid #9ca4a4;box-sizing:content-box}
      .on{background:#bed2d2;width:26px;height:26px;display:flex;align-items:center;justify-content:center;border:1px solid #a6c0c0;box-sizing:border-box}
    </style>` + flowRow([
      [17, 20, icon('menu', 20)], [50, 42, '<span>菜单(M)</span>'], [78, 8, caret()], [86, 1, sep(24)],
      [165.5, 133, sel('面', 133)], [310, 140, sel('整个装配', 140)],
      [396, s, icon('s1', s)], [420, s, icon('s2', s)], [445, s, icon('s3', s)], [462, 8, caret()], [481, s, icon('s4', s)], [506, s, icon('s5', s)], [529, s, icon('s6', s)], [548, 8, caret()],
      [569, 26, '<span class="on">' + icon('s7', 20) + '</span>'], [592, s, icon('s8', s)],
      [680, 139, sel('相切面', 139)],
      [766, s, icon('arrowr', 17)], [792, s, icon('p1', s)], [816, s, icon('p2', s)], [842, s, icon('p3', s)], [866, s, icon('p4', s)], [893, s, icon('p5', s)], [917, s, icon('p6', s)], [943, s, icon('p7', s)], [966, s, icon('p8', s)], [993, s, icon('p9', s)], [1016, s, icon('p10', s)], [1042, s, icon('p11', s)], [1066, s, icon('p12', s)],
      [1085, 1, sep(24)], [1105, s, icon('v1', s)], [1130, s, icon('v2', s)], [1154, s, icon('v3', s)], [1180, s, icon('v4', s)], [1199, 8, caret()], [1217, s, icon('v5', s)], [1235, 8, caret()], [1255, s, icon('v6', s)], [1273, 8, caret()], [1290, s, icon('v7', s)], [1309, 8, caret()], [1322, 1, sep(24)], [1911, 8, caret()],
    ]);
  }
}
customElements.define('nx-selbar', NxSelbar);

class NxMain extends HTMLElement {
  connectedCallback() {
    const root = this.attachShadow({mode: 'open'});
    root.innerHTML = `<style>
      :host{display:flex;flex:1;min-height:0;height:799px}
    </style><slot name="rail"></slot><slot name="panel"></slot><slot name="view"></slot>`;
  }
}
customElements.define('nx-main', NxMain);

class NxRail extends HTMLElement {
  connectedCallback() {
    const items = [['r_asm', 50, 30], ['r_con', 50, 30], ['r_part', 51, 30], ['r_books', 56, 34], ['r_info', 61, 34], ['r_doc', 62, 30], ['r_clock', 56, 32], ['r_spec', 51, 32], ['r_drill', 47, 32], ['r_tool', 54, 32], ['r_stage', 48, 32], ['r_table', 50, 32], ['r_list', 50, 32]];
    const root = this.attachShadow({mode: 'open'});
    root.innerHTML = `<style>
      :host{display:flex;flex-direction:column;width:39px;flex:none;background:#e1e1e1;border-right:1px solid #aaa;box-sizing:content-box}
      .gear{height:20px;display:flex;justify-content:center;align-items:center;margin-bottom:20px}
      .it{display:flex;align-items:center;justify-content:center;width:37px;margin-left:2px;box-sizing:border-box}
      .on{background:#fff;border:1px solid #bbb;border-right:none;width:38px;margin-right:-1px;position:relative}
    </style><div class="gear">${icon('r_gear', 14)}</div>` +
      items.map(i => `<div class="it${i[0] === 'r_tool' ? ' on' : ''}" style="height:${i[1]}px">${icon(i[0], i[2])}</div>`).join('');
  }
}
customElements.define('nx-rail', NxRail);

class NxPanel extends HTMLElement {
  connectedCallback() {
    const root = this.attachShadow({mode: 'open'});
    const cards = [0, 1, 2, 3, 4].map(() => `<div class="card">${icon('minidoc', 14)}</div>`).join('');
    root.innerHTML = `<style>
      :host{display:block;width:331px;flex:none;background:#fff;border-right:1px solid #bbb;box-sizing:content-box;font-size:13px;overflow:hidden}
      .head{padding:2px 0 0 10px;height:24px;color:#222}
      .box{margin:12px 0 0 11px;width:40px;height:18px;border:1px solid #ccc}
      .frame{box-sizing:border-box;margin:11px 0 0 6px;width:316px;height:725px;border:1px solid #ddd;padding:9px 0 0 4px}
      .fold{height:24px;padding-left:2px}
      .card{box-sizing:border-box;width:280px;height:58px;border:1px solid #ddd;margin-bottom:4px;padding:8px 0 0 5px}
      .cards{margin-top:-3px}
    </style>
    <div class="head">角</div><div class="box"></div>
    <div class="frame">
      <div class="fold">${icon('folder', 14)}</div><div class="fold">${icon('folderopen', 14)}</div>
      <div class="cards">${cards}</div>
    </div>`;
  }
}
customElements.define('nx-panel', NxPanel);

class NxModel extends HTMLElement {
  connectedCallback() {
    const line = '#27333a';
    const hole = (cx, cy, rx, ry, g = 'hb') => `<ellipse cx="${cx}" cy="${cy}" rx="${rx}" ry="${ry}" fill="url(#${g})" stroke="${line}" stroke-width=".7"/>`;
    const dot = (cx, cy, c) => `<ellipse cx="${cx}" cy="${cy}" rx="2.3" ry="3" fill="${c}" stroke="#234" stroke-width=".5"/>`;
    const P = '#5a2a90', G = '#30e020';
    const gold = (cx, cy) => `<ellipse cx="${cx}" cy="${cy}" rx="4.5" ry="2.5" fill="#c89838" stroke="#333" stroke-width=".6"/>`;
    const grey = (cx, cy, rx = 8, ry = 3.5) => `<ellipse cx="${cx}" cy="${cy}" rx="${rx}" ry="${ry}" fill="#7c8c92" stroke="#333" stroke-width=".6"/>`;
    const poly = (pts, fill, st = line, w = .8) => `<path d="${pts}" fill="${fill}" stroke="${st}" stroke-width="${w}" stroke-linejoin="round"/>`;
    const label = (x, y, rot) => `<text x="${x}" y="${y}" transform="rotate(${rot} ${x} ${y})" font-family="Liberation Sans" font-weight="bold" font-size="17" fill="#2d3a44" text-anchor="middle">M36</text>`;
    const root = this.attachShadow({mode: 'open'});
    root.innerHTML = `<style>
      :host{display:block;flex:1;min-width:0;background:linear-gradient(#adaeb0,#c6c7c9 35%,#e9eaec 85%);overflow:hidden}
      svg{display:block;width:100%;height:100%}
    </style>
    <svg viewBox="372 219 1548 799" preserveAspectRatio="none">
      <defs>
        <linearGradient id="hb" x1="0" y1="0" x2="1" y2="0"><stop offset="0" stop-color="#88afcb"/><stop offset=".55" stop-color="#6a93ad"/><stop offset="1" stop-color="#a5c2d6"/></linearGradient>
        <linearGradient id="hf" x1="0" y1="0" x2=".2" y2="1"><stop offset="0" stop-color="#7d8990"/><stop offset=".55" stop-color="#c6d6dc"/><stop offset="1" stop-color="#e6f2f6"/></linearGradient>
        <linearGradient id="fil" x1="0" y1="0" x2="1" y2="0"><stop offset="0" stop-color="#7a8a8e"/><stop offset=".5" stop-color="#8e9ca0"/><stop offset="1" stop-color="#68767c"/></linearGradient>
        <linearGradient id="notch" x1="0" y1="0" x2="1" y2="0"><stop offset="0" stop-color="#8b989d"/><stop offset="1" stop-color="#dbe5e8"/></linearGradient>
      </defs>
      ${poly('M465.5 514L460.4 682L877 888L883 720L816.5 686.2L816.5 676.7L707.9 622.4L644 590L534.4 535.7L532.9 546.6z', '#678ba3')}
      ${poly('M883 720L877 888L1653 606L1658.5 438.6L1585.7 464.2L1584.8 455.8L955.3 682.3L955.3 694z', '#79a0bc')}

      ${poly('M644 590L659.4 584.7L723 615L707.9 622.4L705.3 657Q704 661 700 659.3L649 635.5Q641 630 641.5 622.4z', '#cfdfe5')}
      ${poly('M643 590L659.4 584.7L659.4 622.4L641.5 622.4z', 'url(#notch)', line, .5)}
      ${poly('M659.4 584.7L723 615L707.9 622.4L705 646.3L659.4 622.4z', '#6a767c')}
      <ellipse cx="670.6" cy="610" rx="3.5" ry="5" fill="#e4eef2" stroke="#222" stroke-width=".7"/>

      ${poly('M1221 572.5L1290 547.6L1305.8 555.3L1305 587.8Q1304 592 1299 596.6L1241 618.4Q1235 617 1235.7 608.9L1236.6 582z', '#cfe0e6')}
      ${poly('M1221 572.5L1290 547.6L1289.3 587.8L1235.7 608.9L1236.6 582z', '#77858b')}
      ${poly('M1290 547.6L1305.8 555.3L1305 587.8L1289.3 587.8z', '#8a989c', line, .5)}
      <ellipse cx="1276.8" cy="572.5" rx="4.5" ry="6" fill="#e4eef2" stroke="#222" stroke-width=".7"/>

      <!-- top face -->
      ${poly('M539.5 476L820 374L835.4 381.3L903.3 357L888 348L913.5 339.3L934 349.7L969 337L949 326.3L1168.6 246.5L1183 253L1221 270Q1236 280 1252 274L1308 253L1418.7 308.5L1401.8 315L1418.7 321.8L1464.3 344.8L1481.3 339.8L1591.5 393.8L1529 416.8Q1520 420 1531 426L1584.8 455.8L1305.8 555.3L1290 547.6L1221 572.5L1236.6 582L955.3 682.3L896.6 652.8Q888 649 879.8 652.8L816.5 676.7L707.9 622.4L723 615L659.4 584.7L644 590L534.4 535.7L593 514Q604 509 600.7 507.5z', '#c0ffff')}
      ${poly('M888 348L903.3 357L888 362z', '#7a8a8e')}
      ${poly('M949 326.3L969 337L949 344z', '#7a8a8e')}
      ${poly('M1401.8 315L1418.7 321.8L1418.7 308.5z', '#7a8a8e')}

      <!-- yellow pockets -->
      ${poly('M465.5 514L539.5 489L593 514L534.4 535.7L532.9 546.6z', '#ffff60')}
      ${poly('M539.5 476L600.7 507.5Q602 510 593 514L539.5 489z', '#b8892f')}
      ${hole(540.5, 518.4, 33, 15)}
      ${poly('M534.4 535.7L593 514L600 525L540 546z', '#c0ffff', 'none', 0)}
      ${poly('M534.4 535.7L593 514', 'none')}
      ${gold(483.4, 514.5)}${gold(537, 494.5)}${gold(530, 539)}

      ${poly('M1183 253L1234.4 232L1293.8 257.6L1252 274Q1236 280 1221 270z', '#ffff60')}
      ${hole(1238, 262.5, 33.5, 14)}
      ${poly('M1183 253L1221 270Q1236 280 1252 274L1293.8 257.6L1290 270L1240 290L1190 268z', '#c0ffff', 'none', 0)}
      ${poly('M1183 253L1221 270Q1236 280 1252 274L1293.8 257.6', 'none')}
      ${gold(1240, 238.4)}

      ${poly('M1591.5 393.8L1591.5 406L1531 426Q1520 420 1529 416.8z', '#7a8a8e')}
      ${poly('M1591.5 406L1658.5 438.6L1585.7 464.2L1584.8 455.8L1531 426z', '#c5dde2')}
      ${hole(1582.6, 434.7, 33, 14.5)}
      ${grey(1590.6, 412, 4.5, 2.4)}${grey(1640.6, 437, 4.5, 2.4)}${grey(1587, 457, 4, 2)}

      ${poly('M816.5 686.2L879.8 665L896.6 665L955.3 694L882.9 720z', '#ffff60')}
      ${poly('M816.5 676.7L879.8 652.8Q888 649 896.6 652.8L955.3 682.3L955.3 694L896.6 665L879.8 665L816.5 686.2z', '#b8892f')}
      ${poly('M879.8 652.8L879.8 665L896.6 665L896.6 652.8Q888 649 879.8 652.8z', '#d2a24a')}
      ${hole(888, 688.8, 33.5, 15)}
      ${gold(833.4, 688.4)}${gold(938.5, 693.6)}${gold(884, 713.5)}
      <path d="M872 709l8-3l-3-2M866 708l8 3" fill="none" stroke="#333" stroke-width=".8"/>

      <!-- cavity -->
      ${poly('M634 507.5L1223 290.7L1222 367L705 555z', '#7a8a8e')}
      ${poly('M1252 293L1497 414L1493 423L1417.4 450L1250 368z', '#68767c')}
      ${poly('M1223 290.7L1252 293L1250 368L1222 367z', 'url(#fil)')}
      ${poly('M708 557.4L1222 369Q1236 364 1250 370L1413 452L899 640Q888 643 876 640z', '#c2d8e0')}
      <path d="M632.9 504.5L1223 289.3Q1238 285 1252 291L1497.8 413.7Q1501 418 1493.3 423.3L1417 451" fill="none" stroke="${line}" stroke-width="1"/>
      <path d="M633.9 506.5L1223 291Q1238 287 1252 293L1496 414" fill="none" stroke="#e8f0f2" stroke-width="1.4"/>
      <path d="M705 556L1222 367Q1236 362 1250 368L1416 452" fill="none" stroke="#e8f0f2" stroke-width="2.2"/>
      <path d="M705 553L1222 365Q1236 360 1250 366L1416 449" fill="none" stroke="${line}" stroke-width=".7"/>
      <path d="M632.9 504.5Q622 510 626.2 512Q627 518 631 519.7L708 557.4" fill="#c0ffff" stroke="${line}" stroke-width=".8"/>
      <path d="M634 507.5Q628 512 631 519.7L705 555" fill="none" stroke="${line}" stroke-width=".6"/>
      <path d="M708 557.4L876 640Q888 643 899 640L1417 451" fill="none" stroke="${line}" stroke-width=".9"/>
      ${grey(927.8, 505)}${grey(1276.8, 396.9)}
      <ellipse cx="841.5" cy="522.3" rx="10" ry="5" fill="#d5e4e8" stroke="#7a6a20" stroke-width="2"/>
      ${gold(1059.4, 542.7)}

      ${poly('M1303.6 302.7L1355 285.5Q1360 284 1365 287L1392.9 304.6L1346 323.8L1312 310z', '#7a8a8e')}
      ${poly('M1312.5 306.5L1352.7 294.3L1384 310.4L1343.8 323.8z', '#c2d8e0')}
      ${grey(1366, 306.5, 3.5, 2)}

      ${hole(597.7, 542.2, 20, 8.5)}${hole(811, 648, 20, 8.5)}${hole(1526.8, 387, 20, 8.5)}

      <!-- side holes -->
      <ellipse cx="672" cy="691" rx="14" ry="22" transform="rotate(-12 672 691)" fill="url(#hf)" stroke="${line}" stroke-width=".9"/>
      ${label(705, 711, 27)}
      <ellipse cx="1103.6" cy="713" rx="15" ry="21" transform="rotate(18 1103.6 713)" fill="url(#hf)" stroke="${line}" stroke-width=".9"/>
      <ellipse cx="1432" cy="591.6" rx="15" ry="21" transform="rotate(18 1432 591.6)" fill="url(#hf)" stroke="${line}" stroke-width=".9"/>
      <ellipse cx="1216.5" cy="685.4" rx="12.5" ry="18" transform="rotate(18 1216.5 685.4)" fill="url(#hf)" stroke="${line}" stroke-width=".8"/>
      <ellipse cx="1318.8" cy="647" rx="12.5" ry="18" transform="rotate(18 1318.8 647)" fill="url(#hf)" stroke="${line}" stroke-width=".8"/>
      ${label(1125, 700, 78)}${label(1398, 603, 78)}
      ${dot(1039.3, 667, P)}${dot(1050, 662.8, G)}${dot(1038, 705, P)}${dot(1048.7, 701, G)}${dot(1116, 639, P)}${dot(1115.6, 657.8, G)}${dot(1114.7, 677, P)}
      ${dot(1418.8, 528.5, P)}${dot(1429.5, 524.7, G)}${dot(1417.9, 566.4, P)}${dot(1428, 563, G)}${dot(1495.5, 500.6, P)}${dot(1495, 519.7, G)}${dot(1494, 538.5, P)}

      <!-- wcs triad -->
      <g fill="none" stroke="#bcc4c4" stroke-width="1">
        <path d="M436 937L455 928L472 936V955L453 965L436 955z" fill="#d9dcdc"/><path d="M436 937L453 946L472 936M453 946V965"/>
      </g>
      <path d="M437 950L470 937" stroke="#b0ccb0" stroke-width="3"/>
      <text x="471" y="941" font-size="9" fill="#a0c8a0" font-family="Liberation Sans">Y</text>
      <path d="M436 950V922" stroke="#0f38c0" stroke-width="3"/><path d="M436.5 912l-3.5 11h7z" fill="#0f38c0"/>
      <text x="432" y="914" font-size="13" fill="#2a50e0" font-family="Liberation Sans">Z</text>
      <path d="M436 952L456 962" stroke="#d02020" stroke-width="3"/><path d="M465 967l-12-1l3-6z" fill="#d02020"/>
      <text x="464" y="974" font-size="12" fill="#d04040" font-family="Liberation Sans">X</text>
      <circle cx="435" cy="952" r="3.5" fill="#bbb" stroke="#888" stroke-width=".5"/>

      <!-- cursor -->
      <g fill="none" stroke="#111">
        <path d="M434 422h28M448.5 408v28" stroke-width="3" stroke="#fff"/><path d="M434 422h28M448.5 408v28" stroke-width="1"/>
        <path d="M442 410a12 12 0 0 0-6 6M436 428a12 12 0 0 0 7 6M454 434a12 12 0 0 0 6-6" stroke-width=".8"/>
        <path d="M455 411l2-3l3 1l2 3l-3 3l-3-1z" fill="#fff" stroke-width=".8"/>
      </g>
    </svg>`;
  }
}
customElements.define('nx-model', NxModel);

class NxStatus extends HTMLElement {
  connectedCallback() {
    const root = this.attachShadow({mode: 'open'});
    root.innerHTML = `<style>
      :host{display:flex;flex:none;align-items:center;background:#fff;border-top:1px solid #b4b4b4;font-size:11.5px;color:#222;padding:0 0 3px 3px;box-sizing:content-box;height:18px;-webkit-text-stroke:.2px #222}
      .fps{margin-left:868px}
    </style><span>选择面</span><span class="fps">帧速率：7.6 f.p.s.</span>`;
  }
}
customElements.define('nx-status', NxStatus);

class TaskBtn extends HTMLElement {
  connectedCallback() {
    const root = this.attachShadow({mode: 'open'});
    root.innerHTML = `<style>
      :host{display:flex;box-sizing:border-box;width:144px;height:40px;margin-left:9px;padding-left:6px;align-items:center;gap:4px;border-bottom:2px solid #5aaee6;color:#e8e8e8;font-size:12px;white-space:nowrap;flex:none}
      :host([active]){width:153px;margin-left:0;margin-right:-4px;background:#34383e;padding-left:10px;gap:5px}
      :host([wide]){gap:9px;padding-left:7px}
    </style>${icon(this.getAttribute('icon'), 24)}<span>${this.getAttribute('text')}</span>`;
  }
}
customElements.define('task-btn', TaskBtn);

class NxTaskbar extends HTMLElement {
  connectedCallback() {
    const tray = [
      [1457 - 1430, 18, icon('tperson', 18)],
      [1508 - 1430, 60, '<span class="cpu">61℃<br>CPU温度</span>'],
      [1551 - 1430, 14, icon('usb', 16)],
      [1580 - 1430, 12, '<svg width="11" height="7"><path d="M1 6l4.5-5l4.5 5" fill="none" stroke="#fff" stroke-width="1.2"/></svg>'],
      [1603 - 1430, 18, icon('gplus', 17)],
      [1627 - 1430, 18, icon('tray1', 16)],
      [1652 - 1430, 18, icon('tray2', 18)],
      [1676 - 1430, 18, icon('wifi', 18)],
      [1700 - 1430, 18, icon('vol', 18)],
      [1722 - 1430, 16, '<span style="font-size:15px">中</span>'],
      [1753 - 1430, 18, icon('wan', 16)],
      [1785 - 1430, 22, '<span class="n39">39</span>'],
      [1840 - 1430, 64, '<span class="cpu">16:17 周五<br>2021/6/4</span>'],
      [1895 - 1430, 18, icon('notif', 18)],
    ];
    const root = this.attachShadow({mode: 'open'});
    root.innerHTML = `<style>
      :host{display:flex;height:40px;flex:none;background:#0a0f1a;align-items:center}
      .left{display:flex;width:203px;flex:none;align-items:center}
      .tray{display:flex;align-items:center;color:#fff;font-size:12px}
      .cpu{text-align:center;line-height:17px}
      .n39{width:22px;height:22px;border-radius:50%;background:#22c070;color:#fff;font-size:11px;display:flex;align-items:center;justify-content:center;border:1px solid #8fe}
      .btns{display:flex;flex:none;width:1227px}
    </style>
    <div class="left">${flowRow([[24, 22, icon('win', 18)], [74, 24, icon('fan', 24)], [129, 26, icon('scissor', 26)], [178, 26, icon('camyellow', 26)]])}</div>
    <div class="btns">
      <task-btn active icon="nxapp" text="NX 10.0.3.5 - 建..."></task-btn>
      <task-btn wide icon="ie" text="[新提醒] 发表..."></task-btn>
      <task-btn icon="ppt" text="新建 Microsoft P..."></task-btn>
      <task-btn icon="ppt" text="外挂命令简介.ppt..."></task-btn>
      <task-btn icon="folderv" text="E:\\U_PAN\\V1"></task-btn>
      <task-btn icon="disk" text="E:\\"></task-btn>
      <task-btn icon="folderv" text="D:\\视频"></task-btn>
      <task-btn icon="baidu" text="欢迎使用百度网盘"></task-btn>
    </div>
    <div class="tray">${flowRow(tray)}</div>`;
  }
}
customElements.define('nx-taskbar', NxTaskbar);

class DlgSection extends HTMLElement {
  connectedCallback() {
    const root = this.attachShadow({mode: 'open'});
    root.innerHTML = `<style>
      :host{display:block;background:#fff;border-bottom:1px solid #d4d4d4;box-sizing:border-box}
      .hd{display:flex;height:30px;box-sizing:border-box;padding:0 7px 6px;align-items:center;justify-content:space-between;color:#3a93c6;font-size:14px}
      .bd{padding:0 9px}
    </style>
    <div class="hd"><span>${this.getAttribute('title')}</span><svg width="11" height="8" viewBox="0 0 11 8"><path d="M1 7l4.5-5.5L10 7" fill="none" stroke="#2f93c8" stroke-width="2"/></svg></div>
    <div class="bd"><slot></slot></div>`;
  }
}
customElements.define('dlg-section', DlgSection);

class NxList extends HTMLElement {
  connectedCallback() {
    const rows = ['胶位面', '分型面', '碰穿面', '插穿面', '排气槽', '外观胶位面', '高精度胶位面', '配合面', '零件本色', '产品本色', '产品基准', '标准件'];
    const root = this.attachShadow({mode: 'open'});
    root.innerHTML = `<style>
      :host{display:flex;box-sizing:border-box;width:306px;height:195px;border:1px solid #a8a8a8;background:#fff;overflow:hidden;font-size:12px}
      .rows{flex:1;padding:0 0 0 1px;overflow:hidden}
      .row{height:17px;line-height:17px;color:#222;white-space:nowrap}
      .sel{background:#3399ff;color:#fff;outline:1px dotted #c06a20;outline-offset:-1px}
      .bar{width:15px;margin:1px 2px 1px 0;background:#f0f0f0;display:flex;flex-direction:column;flex:none}
      .btn{height:17px;display:flex;align-items:center;justify-content:center;flex:none}
      .thumb{height:133px;background:#c8c8c8;flex:none}
      .gap{flex:1}
    </style>
    <div class="rows">${rows.map(r => `<div class="row${r === '插穿面' ? ' sel' : ''}">${r}</div>`).join('')}</div>
    <div class="bar">
      <div class="btn"><svg width="9" height="6"><path d="M1 5l3.5-4L8 5" fill="none" stroke="#555" stroke-width="1.5"/></svg></div>
      <div class="thumb"></div><div class="gap"></div>
      <div class="btn"><svg width="9" height="6"><path d="M1 1l3.5 4L8 1" fill="none" stroke="#555" stroke-width="1.5"/></svg></div>
    </div>`;
  }
}
customElements.define('nx-list', NxList);

class NxDialog extends HTMLElement {
  connectedCallback() {
    const root = this.attachShadow({mode: 'open'});
    root.innerHTML = `<style>
      :host{position:absolute;left:61px;top:217px;width:328px;height:651px;box-sizing:border-box;background:#e6e6e6;border:1px solid #aaa;border-top:none;font-size:12px;color:#222;z-index:5;display:flex;flex-direction:column}
      .head{height:24px;background:#5b8a82;color:#fff;display:flex;align-items:center;padding:0 7px 1px 8px;box-sizing:border-box;flex:none;margin:0 -1px;font-size:12px;letter-spacing:.2px}
      .head span{flex:1;margin-left:12px}
      .body{padding:8px 9px 0;flex:none}
      .tpl{height:63px}
      .sel{height:25px}
      .yellow{box-sizing:border-box;height:50px;margin-top:6px;background:#ff0;border:2px solid #666;border-right:3px solid #aaa}
      .info{display:flex;height:24px;align-items:center;padding-bottom:2px;box-sizing:border-box}
      .info span:nth-child(2){margin-left:28px}
      .info span:nth-child(3){margin-left:11px}
      .idx{display:flex;height:18px;align-items:center;justify-content:space-between}
      .idx i{display:block;box-sizing:border-box;width:72px;height:15px;background:#fff;border:1px solid #666}
      nx-list{margin-top:6px}
      .cfg{box-sizing:border-box;height:29px;margin-top:2px;border:1px solid #aaa;display:flex;align-items:center;justify-content:center}
      .inh{display:flex;height:25px;align-items:center;gap:5px}
      .inh i{display:block;box-sizing:border-box;width:13px;height:13px;border:1px solid #444;background:#fff}
      .clr{display:flex;height:32px;gap:2px;margin-bottom:2px}
      .clr div:first-child{flex:1;display:flex;align-items:center;padding-bottom:2px;box-sizing:border-box}
      .clr.on div:first-child{background:#fcd66f}
      .pick{box-sizing:border-box;width:32px;display:flex;align-items:center;justify-content:center;border:1px solid #aaa}
      .clr.on .pick{background:#f8e8ae;border-color:#fcd66f}
      .rule{height:70px;margin-top:-2px}
      .opts{box-sizing:border-box;height:32px;background:#f0f5f5;border:1px solid #d5dcdc;display:flex;align-items:center;padding-left:4px}
      .opts b{font-weight:normal;display:flex;align-items:center;gap:5px;width:85px}
      .opts i{display:block;box-sizing:border-box;width:12px;height:12px;border-radius:50%;border:1px solid #444;background:#fff}
      .opts i.on{background:radial-gradient(#333 0 3px,#fff 3.4px)}
      .more{height:21px;display:flex;align-items:flex-end;justify-content:center;padding-bottom:4px;box-sizing:border-box;margin:0 5px;border-bottom:1px solid #ccc;flex:none}
      .btns{display:flex;justify-content:flex-end;gap:5px;padding:9px 15px 0 0}
      .b{box-sizing:border-box;width:54px;height:25px;background:#c8cbd1;border:1px solid #a8a8a8;display:flex;align-items:center;justify-content:center}
      .b.ok{background:#8fc4e4;border-color:#5aa3d3}
    </style>
    <div class="head">${icon('gearw', 13)}<span>设置对象颜色（红库）</span>${icon('reset', 14)}<span style="flex:none;margin-left:9px;line-height:0">${icon('closew', 13)}</span></div>
    <div class="body">
      <dlg-section class="tpl" title="模板设置"><nx-select class="sel" text="A公司设计标准"></nx-select></dlg-section>
      <div class="yellow"></div>
      <div class="info"><span>插穿面</span><span>颜色ID</span><span>6</span></div>
      <div class="idx"><span>颜色索引</span><i></i></div>
      <nx-list></nx-list>
      <div class="cfg">模板颜色配置</div>
      <div class="inh"><i></i><span>继承颜色</span></div>
      <div class="clr on"><div>面着色 (0)</div><div class="pick">${icon('cubew', 22)}</div></div>
      <div class="clr"><div>体着色 (0)</div><div class="pick">${icon('cubeo', 22)}</div></div>
      <dlg-section class="rule" title="选择规则"><div class="opts"><b><i class="on"></i>内部</b><b><i></i>内侧/交叉</b></div></dlg-section>
    </div>
    <div class="more">${caret().replace('width="7" height="4"', 'width="10" height="5"')}</div>
    <div class="btns"><div class="b ok">确定</div><div class="b">应用</div><div class="b">取消</div></div>`;
  }
}
customElements.define('nx-dialog', NxDialog);

class NxUpload extends HTMLElement {
  connectedCallback() {
    const root = this.attachShadow({mode: 'open'});
    root.innerHTML = `<style>
      :host{position:absolute;left:1709px;top:28px;width:104px;height:25px;box-sizing:border-box;display:flex;border:1px solid #2b9bf8;border-radius:4px;overflow:hidden;z-index:6;font-size:12px;color:#6fb6ee;background:linear-gradient(#dff3ff,#c2e6fb)}
      .l{width:29px;background:#2b9bf8;display:flex;align-items:center;justify-content:center}
      .r{flex:1;display:flex;align-items:center;justify-content:center}
    </style><div class="l">${icon('baiduw', 20)}</div><div class="r">拖拽上传</div>`;
  }
}
customElements.define('nx-upload', NxUpload);

class NxWatermark extends HTMLElement {
  connectedCallback() {
    const root = this.attachShadow({mode: 'open'});
    root.innerHTML = `<style>
      :host{position:absolute;left:1637px;top:985px;width:270px;height:90px;z-index:6;pointer-events:none;font-family:"Noto Sans CJK SC",sans-serif}
      svg{position:absolute;left:0;top:0}
      .t{position:absolute;left:82px;top:-4px;font-size:36px;font-weight:bold;color:#fff;opacity:.5;white-space:nowrap;letter-spacing:3px}
      .u{position:absolute;left:82px;top:55px;font:15px "Liberation Sans",sans-serif;color:#b0b0b0;letter-spacing:1px;white-space:nowrap}
    </style>
    <svg width="72" height="88" viewBox="0 0 72 88" opacity=".62">
      <path d="M36 0L71 20V62L36 86L1 62V20z" fill="#a6d6ee"/>
      <path d="M36 30L71 20V62L36 86z" fill="#7fb9da"/>
      <path d="M1 40L36 60L71 40V62L36 86L1 62z" fill="#1a6a98"/>
    </svg>
    <span class="t">3D世界网</span><span class="u">WWW.3DSJW.COM</span>`;
  }
}
customElements.define('nx-watermark', NxWatermark);

class NxIme extends HTMLElement {
  connectedCallback() {
    const root = this.attachShadow({mode: 'open'});
    root.innerHTML = `<style>
      :host{position:absolute;left:1640px;top:1010px;width:208px;height:25px;background:rgba(255,255,255,.86);border-radius:4px;z-index:7;display:flex;align-items:center;color:#1a80d0;font-size:15px}
      .ph{position:absolute;left:210px;top:8px}
    </style>` + flowRow([
      [12, 18, icon('imewan', 17)], [36, 18, '<span>中</span>'], [58, 18, icon('moon', 16)], [79, 16, icon('imecomma', 14)],
      [101, 18, icon('kbd', 17)], [123, 18, icon('imeperson', 15)], [147, 18, '<span>简</span>'], [168, 18, icon('shirt', 16)], [191, 18, icon('imegear', 16)],
    ]) + `<span class="ph">${icon('phone', 16)}</span>`;
  }
}
customElements.define('nx-ime', NxIme);
</script>
</body>
</html>
